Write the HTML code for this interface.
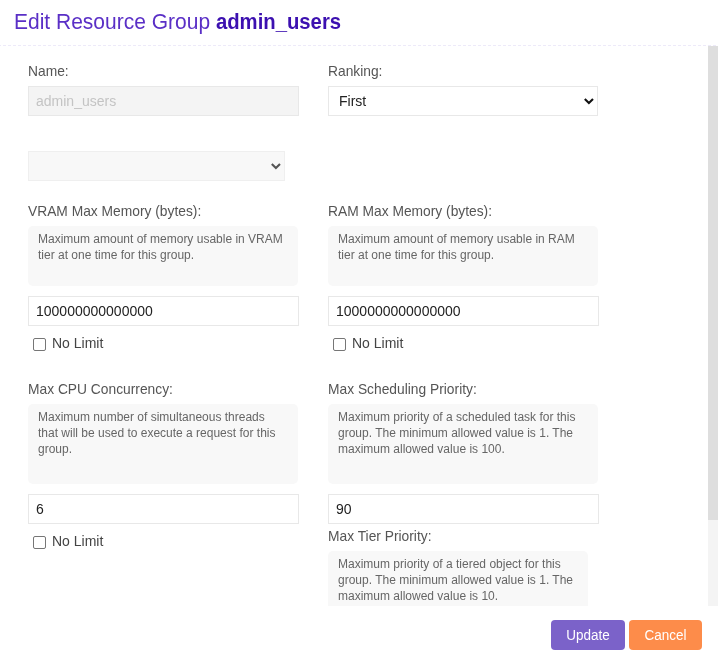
<!DOCTYPE html>
<html><head><meta charset="utf-8">
<style>
*{box-sizing:border-box;margin:0;padding:0}
html,body{width:723px;height:662px;overflow:hidden;background:#fff}
body{font-family:"Liberation Sans",sans-serif;position:relative;will-change:transform}
.abs{position:absolute}
.title{left:14px;top:9px;font-size:21px;line-height:26px;color:#5a2fc6;white-space:nowrap;transform-origin:0 20.3px;transform:scaleY(1.08)}
.title b{font-size:20.3px;color:#3c10b0;font-weight:bold}
.dash{left:0;top:45px;width:718px;height:1px}
.lbl{font-size:13.8px;line-height:16px;color:#555;white-space:nowrap;transform-origin:0 12.75px;transform:scaleY(1.1)}
.inp{height:30px;border:1px solid #e8e8e8;background:#fff;font-size:14px;color:#222;padding-left:7px;line-height:28px;white-space:nowrap}
.help{background:#f8f8f8;border-radius:5px;font-size:12px;line-height:16px;color:#666;padding:5px 10px;white-space:nowrap}
.cb{width:13px;height:13px;border:1px solid #767676;border-radius:2px;background:#fff}
.nl{font-size:14px;line-height:16px;color:#444;white-space:nowrap}
.btn{height:30px;border-radius:4px;color:#fff;font-size:13.5px;line-height:30px;text-align:center}
.btn span{display:inline-block;position:relative;top:1px;transform-origin:0 20px;transform:scaleY(1.07)}
.sb-track{left:708px;top:46px;width:10px;height:560px;background:#f4f4f4}
.sb-thumb{left:708px;top:46px;width:10px;height:474px;background:#dedede}
</style></head><body>
<div class="abs title">Edit Resource Group <b>admin_users</b></div>
<svg class="abs dash" width="718" height="1"><line x1="0" y1="0.5" x2="718" y2="0.5" stroke="#edeaf9" stroke-width="1" stroke-dasharray="3 2" stroke-dashoffset="2"/></svg>

<div class="abs lbl" style="left:28px;top:64px">Name:</div>
<div class="abs inp" style="left:28px;top:86px;width:271px;background:#f4f4f4;border-color:#e8e8e8;color:#c4c4c4">admin_users</div>

<div class="abs lbl" style="left:328px;top:64px">Ranking:</div>
<div class="abs inp" style="left:328px;top:86px;width:270px;padding-left:10px;color:#222">First</div>
<svg class="abs" style="left:584px;top:97px" width="11" height="8"><path d="M0.8 2 L4.9 6 L9 2" fill="none" stroke="#111" stroke-width="2.1"/></svg>

<div class="abs inp" style="left:28px;top:151px;width:257px;background:#f8f8f8;border-color:#efefef"></div>
<svg class="abs" style="left:271px;top:162px" width="11" height="8"><path d="M0.8 2 L4.9 6 L9 2" fill="none" stroke="#555" stroke-width="2.1"/></svg>

<div class="abs lbl" style="left:28px;top:204px">VRAM Max Memory (bytes):</div>
<div class="abs help" style="left:28px;top:226px;width:270px;height:60px">Maximum amount of memory usable in VRAM<br>tier at one time for this group.</div>
<div class="abs inp" style="left:28px;top:296px;width:271px">100000000000000</div>
<div class="abs cb" style="left:33px;top:338px"></div>
<div class="abs nl" style="left:52px;top:335px">No Limit</div>

<div class="abs lbl" style="left:328px;top:204px">RAM Max Memory (bytes):</div>
<div class="abs help" style="left:328px;top:226px;width:270px;height:60px">Maximum amount of memory usable in RAM<br>tier at one time for this group.</div>
<div class="abs inp" style="left:328px;top:296px;width:271px">1000000000000000</div>
<div class="abs cb" style="left:333px;top:338px"></div>
<div class="abs nl" style="left:352px;top:335px">No Limit</div>

<div class="abs lbl" style="left:28px;top:382px">Max CPU Concurrency:</div>
<div class="abs help" style="left:28px;top:404px;width:270px;height:80px">Maximum number of simultaneous threads<br>that will be used to execute a request for this<br>group.</div>
<div class="abs inp" style="left:28px;top:494px;width:271px">6</div>
<div class="abs cb" style="left:33px;top:536px"></div>
<div class="abs nl" style="left:52px;top:533px">No Limit</div>

<div class="abs lbl" style="left:328px;top:382px">Max Scheduling Priority:</div>
<div class="abs help" style="left:328px;top:404px;width:270px;height:80px">Maximum priority of a scheduled task for this<br>group. The minimum allowed value is 1. The<br>maximum allowed value is 100.</div>
<div class="abs inp" style="left:328px;top:494px;width:271px">90</div>

<div class="abs lbl" style="left:328px;top:529px">Max Tier Priority:</div>
<div class="abs" style="left:0;top:46px;width:708px;height:560px;overflow:hidden">
<div class="abs help" style="left:328px;top:505px;width:260px;height:80px">Maximum priority of a tiered object for this<br>group. The minimum allowed value is 1. The<br>maximum allowed value is 10.</div>
</div>

<div class="abs sb-track"></div>
<div class="abs sb-thumb"></div>

<div class="abs btn" style="left:551px;top:620px;width:74px;background:#7b62c9"><span>Update</span></div>
<div class="abs btn" style="left:629px;top:620px;width:73px;background:#fd8c4a"><span>Cancel</span></div>
</body></html>
